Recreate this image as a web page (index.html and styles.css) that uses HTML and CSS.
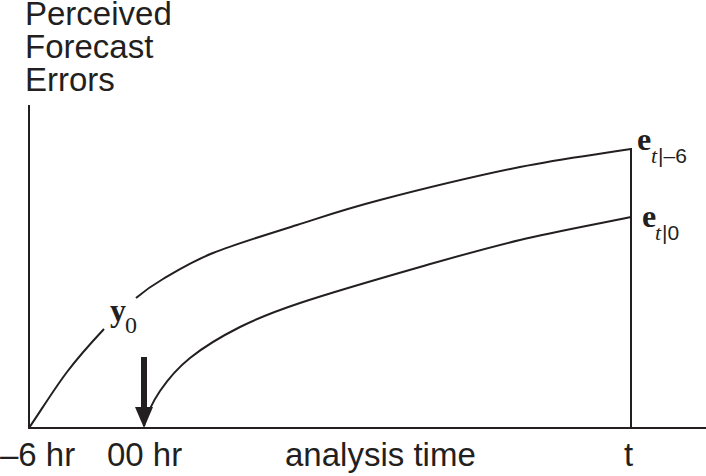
FILE: index.html
```html
<!DOCTYPE html>
<html>
<head>
<meta charset="utf-8">
<link rel="stylesheet" href="styles.css">
</head>
<body>
<div class="figure">
<svg class="chart" viewBox="0 0 706 476" width="706" height="476">
  <g class="ylabel">
    <text x="25" y="25">Perceived</text>
    <text x="25" y="58">Forecast</text>
    <text x="25" y="91">Errors</text>
  </g>
  <line class="axis" x1="29" y1="105" x2="29" y2="428"/>
  <line class="axis" x1="28" y1="428" x2="706" y2="428"/>
  <line class="axis" x1="631" y1="148" x2="631" y2="428"/>
  <path class="curve" d="M29,428 C41.7,409.3 54.5,388.5 67,372 C79.5,355.5 92.5,341.3 104,329"/>
  <path class="curve" d="M136,298 C145.8,289.7 150.2,286.5 163,279 C175.8,271.5 190.7,262 213,253 C235.3,244 269.2,233.8 297,225 C324.8,216.2 342.8,209.7 380,200 C417.2,190.3 478.2,175.5 520,167 C561.8,158.5 594,155 631,149"/>
  <path class="curve" d="M144,426 C147,414 152.3,402.3 160,391 C167.7,379.7 176.7,368.7 190,358 C203.3,347.3 221.7,336.2 240,327 C258.3,317.8 270,313 300,303 C330,293 383.3,277.5 420,267 C456.7,256.5 484.8,248.3 520,240 C555.2,231.7 594,224.7 631,217"/>
  <rect class="arrow" x="141" y="357" width="6" height="52"/>
  <polygon class="arrow" points="135,407 153,407 144,428"/>
  <g class="math">
    <text class="bold" x="110" y="321">y</text>
    <text class="sub0" x="125" y="333">0</text>
    <text class="bold" x="637" y="150">e</text>
    <text class="subi" x="651" y="163">t</text>
    <text class="subs" x="658" y="163">|–6</text>
    <text class="bold" x="642" y="227">e</text>
    <text class="subi" x="655" y="240">t</text>
    <text class="subs" x="662" y="240">|0</text>
  </g>
  <g class="xlabel">
    <text x="0" y="466">–6 hr</text>
    <text x="107" y="466">00 hr</text>
    <text x="285" y="466">analysis time</text>
    <text x="624" y="466">t</text>
  </g>
</svg>
</div>
</body>
</html>
```

FILE: styles.css
```css
html, body {
  margin: 0;
  padding: 0;
  background: #ffffff;
}

.figure {
  width: 706px;
  height: 476px;
  overflow: hidden;
}

.chart {
  display: block;
}

.ylabel text,
.xlabel text {
  font-family: "Liberation Sans", Arial, sans-serif;
  font-size: 33px;
  fill: #231f20;
}

.axis {
  stroke: #231f20;
  stroke-width: 2;
}

.curve {
  fill: none;
  stroke: #231f20;
  stroke-width: 2;
  stroke-linecap: butt;
}

.arrow {
  fill: #231f20;
}

.math .bold {
  font-family: "Liberation Serif", "Times New Roman", serif;
  font-weight: bold;
  font-size: 32px;
  fill: #231f20;
}

.math .sub0 {
  font-family: "Liberation Serif", "Times New Roman", serif;
  font-size: 24px;
  fill: #231f20;
}

.math .subi {
  font-family: "Liberation Serif", "Times New Roman", serif;
  font-style: italic;
  font-size: 22px;
  fill: #231f20;
}

.math .subs {
  font-family: "Liberation Sans", Arial, sans-serif;
  font-size: 21px;
  fill: #231f20;
}
```
